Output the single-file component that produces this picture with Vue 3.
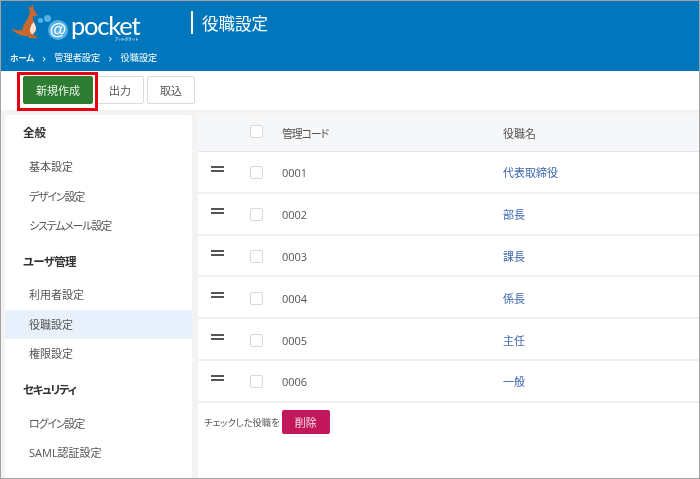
<script setup>
const groups = [
  { title: '全般', cls: '', items: [
    { t: '基本設定' },
    { t: 'デザイン設定', tight: true },
    { t: 'システムメール設定', tight: true }
  ] },
  { title: 'ユーザ管理', cls: 'squeeze-1', items: [
    { t: '利用者設定' },
    { t: '役職設定', active: true },
    { t: '権限設定' }
  ] },
  { title: 'セキュリティ', cls: 'squeeze-2', items: [
    { t: 'ログイン設定', tight: true },
    { t: 'SAML認証設定' }
  ] }
]
const rows = [
  ['0001', '代表取締役'],
  ['0002', '部長'],
  ['0003', '課長'],
  ['0004', '係長'],
  ['0005', '主任'],
  ['0006', '一般']
]
</script>

<template>
  <div class="frame">
    <header class="header">
      <div class="top">
        <div class="logo">
          <svg class="roo" width="30" height="37" viewBox="0 0 30 37">
            <path d="M17 1 L19.5 5 L22 1 L22.5 6 L26 11.5 L25.5 13.5 L22 13 Q21.5 16 23 19 Q26 24 25 28 L22 32 L26 34 L27 35.5 L17 35 L18 32.5 Q12 34 7 31 Q3 29 0 25 Q5 28 11 27 Q13 20 17 15 L19 9 Z" fill="#c8682c"/>
            <path d="M22.5 19 Q26 24 24.5 28 L21.5 31.5 Q18.5 29.5 19 26 Q19.5 22 22.5 19 Z" fill="#f6e4d6"/>
          </svg>
          <span class="dot dot-a"></span>
          <span class="dot dot-b"></span>
          <div class="mark"><span class="at">@</span></div>
          <div class="wordmark">
            <span class="word">pocket</span>
            <span class="kana">アットポケット</span>
          </div>
        </div>
        <div class="pagetitle">役職設定</div>
      </div>
      <nav class="crumbs">
        <b>ホーム</b><i>›</i><span>管理者設定</span><i>›</i><span>役職設定</span>
      </nav>
    </header>

    <div class="toolbar">
      <button class="btn primary">新規作成</button>
      <button class="btn">出力</button>
      <button class="btn">取込</button>
      <div class="highlight"></div>
    </div>

    <div class="body">
      <aside class="side">
        <section v-for="g in groups" :key="g.title" class="group">
          <h3 :class="g.cls">{{ g.title }}</h3>
          <a v-for="it in g.items" :key="it.t" class="item" :class="{ active: it.active, tight: it.tight }">{{ it.t }}</a>
        </section>
      </aside>
      <main class="panel">
        <div class="row head">
          <div class="c-grip"></div>
          <div class="c-check"><span class="box"></span></div>
          <div class="c-code">管理コード</div>
          <div class="c-name">役職名</div>
        </div>
        <div v-for="r in rows" :key="r[0]" class="row">
          <div class="c-grip"><span class="grip"></span></div>
          <div class="c-check"><span class="box"></span></div>
          <div class="c-code">{{ r[0] }}</div>
          <div class="c-name link">{{ r[1] }}</div>
        </div>
        <div class="actions">
          <span>チェックした役職を</span>
          <button class="del">削除</button>
        </div>
      </main>
    </div>
  </div>
</template>

<style>
html, body { margin: 0; background: #f2f2f2; }
</style>
<style scoped>
* { box-sizing: border-box; }
.frame {
  width: 700px; height: 479px; overflow: hidden;
  border: 1px solid #a3a3a3;
  background: #f3f3f3; display: flex; flex-direction: column;
  font-family: "Open Sans", "Noto Sans CJK JP", sans-serif; color: #555;
  font-feature-settings: "palt";
  filter: blur(0.3px);
}
.header { height: 70px; background: #0077bc; color: #fff; flex: none; }
.top { height: 42px; display: flex; }
.logo { width: 190px; position: relative; flex: none; }
.roo { position: absolute; left: 10px; top: 2px; }
.dot { position: absolute; border-radius: 50%; background: #55b1e6; }
.dot-a { left: 37px; top: 17px; width: 5px; height: 5px; }
.dot-b { left: 43px; top: 14px; width: 7px; height: 7px; }
.mark { position: absolute; left: 47px; top: 19px; width: 20px; height: 20px; border-radius: 50%; background: #55b1e6; display: flex; align-items: center; justify-content: center; }
.at { font: 700 17px/20px "Liberation Sans", sans-serif; color: #fff; }
.wordmark { position: absolute; left: 70px; top: 13px; display: flex; flex-direction: column; }
.word { font: 400 25.5px/23px Lato, sans-serif; letter-spacing: -1.2px; color: #fff; }
.kana { font-size: 4px; line-height: 5px; align-self: flex-end; margin-right: 1px; }
.pagetitle { margin-top: 10px; height: 23px; border-left: 2px solid #fff; padding-left: 9px; font-size: 16.5px; line-height: 26px; }
.crumbs { display: flex; align-items: center; gap: 8.5px; padding-left: 9px; height: 28px; font-size: 9.2px; white-space: nowrap; }
.crumbs b { font-weight: 700; font-size: 8.5px; width: 24px; }
.crumbs i { font-style: normal; font-size: 11px; }
.toolbar { height: 39px; background: #fff; flex: none; display: flex; align-items: flex-start; gap: 3px; padding: 5px 0 0 22px; position: relative; }
.highlight { position: absolute; left: 16px; top: 1px; width: 80.5px; height: 38.5px; border: 3px solid #e8000f; pointer-events: none; }
.btn { height: 28px; width: 48px; padding: 0; background: #fff; border: 1px solid #dcdcdc; border-radius: 2px; font: 11px "Noto Sans CJK JP", sans-serif; color: #555; }
.primary { width: 70px; background: #2e7d32; border-color: #2e7d32; color: #e9f2e9; }
.body { flex: 1; display: flex; gap: 6px; padding: 5px 0 0 4px; min-height: 0; }
.side { width: 187px; background: #fff; border-radius: 3px 3px 0 0; }
.group h3 { margin: 0; height: 37px; padding: 0 0 1px 18px; font-size: 11.5px; font-weight: 700; line-height: 36px; color: #333; }
.group + .group h3 { height: 39.75px; padding-top: 3px; }
.squeeze-1 { letter-spacing: -0.7px; }
.squeeze-2 { letter-spacing: -1.3px; }
.item { display: block; height: 29.5px; line-height: 29.5px; padding-left: 24px; font-size: 11px; color: #555; }
.tight { letter-spacing: -1.2px; }
.active { background: #e8f0fb; }
.panel { flex: 1; background: #fff; }
.row { display: flex; height: 41.8px; align-items: center; border-bottom: 2px solid #f0f0f2; font-size: 11px; }
.head { height: 37px; background: #f6f7f9; border-bottom: 1px solid #e6e6ea; }
.c-grip { width: 52px; padding-left: 13px; padding-bottom: 5px; }
.grip { display: block; width: 13px; height: 6px; border-top: 2px solid #555; border-bottom: 2px solid #555; }
.c-check { width: 32px; display: flex; padding-top: 2px; }
.head .c-check { padding: 0 0 3px; }
.box { width: 13px; height: 13px; border: 1px solid #d9d9d9; border-radius: 2px; background: #fff; display: block; }
.c-code { width: 221px; padding-top: 2px; }
.c-name { padding-top: 1px; }
.head .c-code, .head .c-name { padding-top: 0; }
.head .c-code { letter-spacing: -1.2px; }
.link { color: #3d68b0; }
.actions { display: flex; align-items: center; gap: 2px; padding: 7px 0 0 6px; font-size: 9.3px; color: #555; }
.del { width: 48px; height: 24px; padding: 0; border: 0; border-radius: 2px; background: #c2185b; color: #f6e3ea; font: 11px "Noto Sans CJK JP", sans-serif; }
</style>
